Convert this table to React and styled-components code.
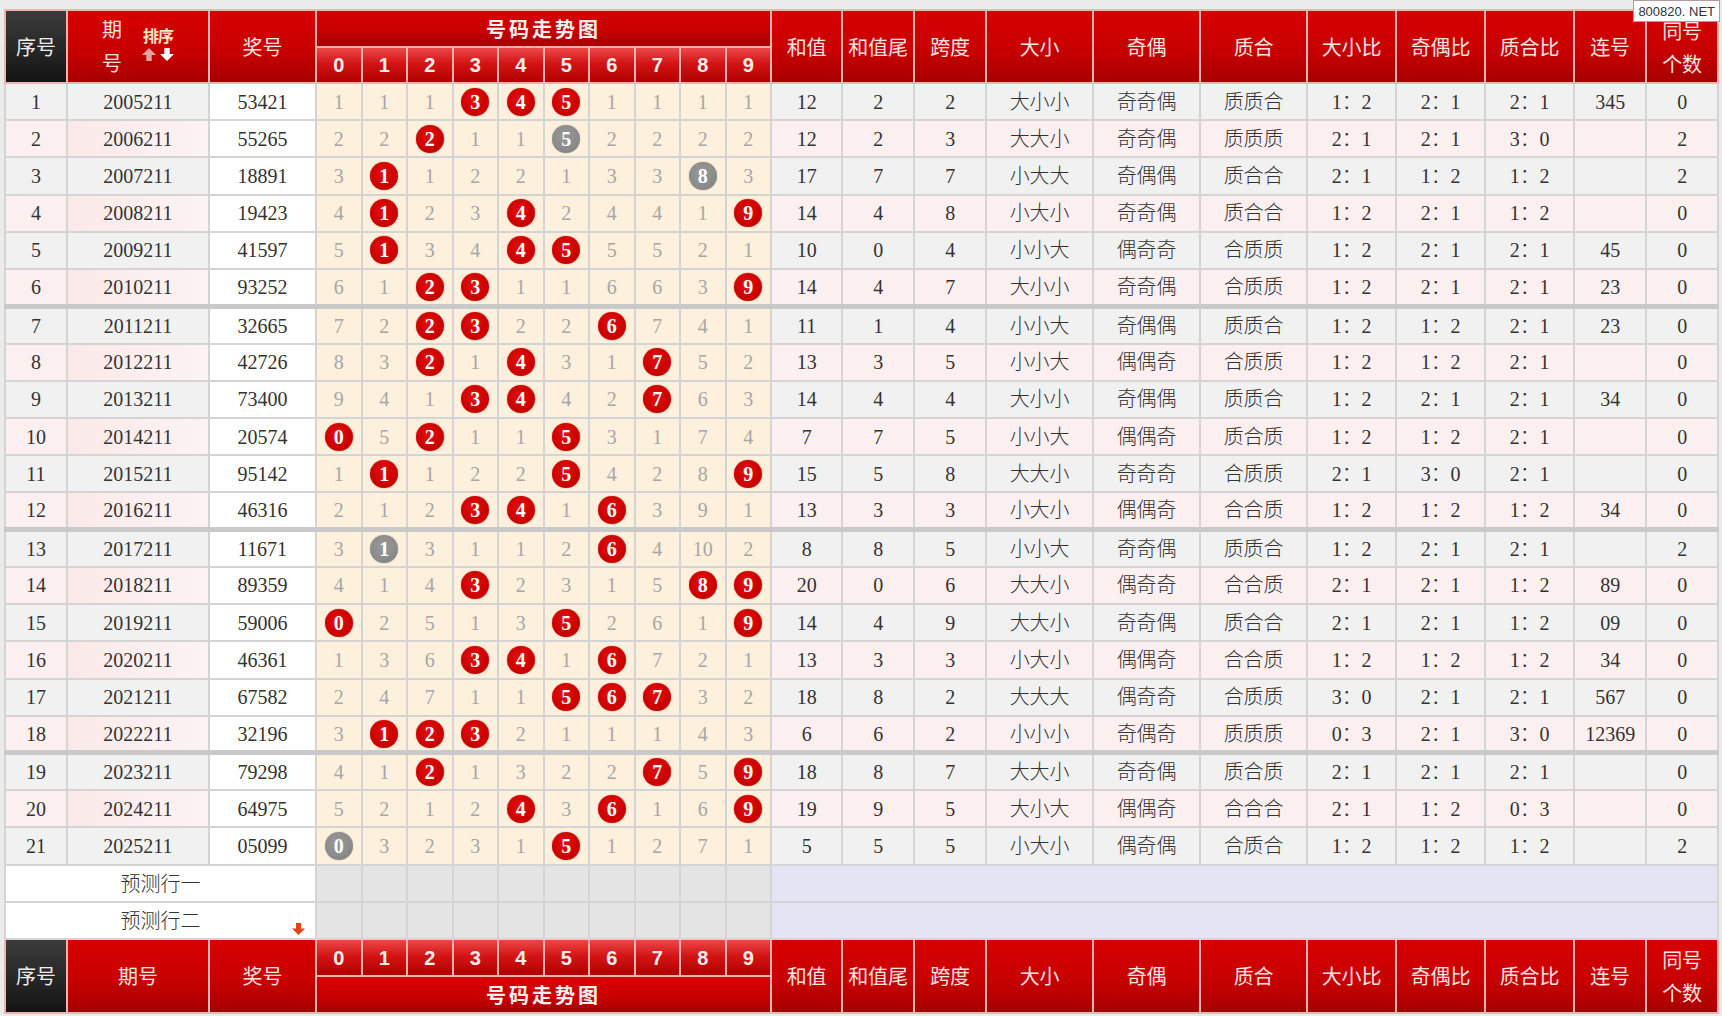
import React from "react";
import styled, { createGlobalStyle, css } from "styled-components";

const GlobalStyle = createGlobalStyle`
  html, body {
    margin: 0;
    padding: 0;
    background: #ebebeb;
  }
  body {
    font-family: "Liberation Serif", "Noto Sans CJK SC", serif;
  }
`;

const SERIF = `"Liberation Serif", "Noto Sans CJK SC", serif`;
const SANS = `"Noto Sans CJK SC", "Liberation Sans", sans-serif`;

const COLS = [62, 142, 107, ...Array(10).fill(45.5), 71, 72, 72, 107, 107, 107, 89, 89, 89, 72, 72];

const TAIL_HEADS = ["和值", "和值尾", "跨度", "大小", "奇偶", "质合", "大小比", "奇偶比", "质合比", "连号"];

// miss: R = red ball, G = gray ball (repeat), number = missing count
const ROWS = [
  ["2005211", "53421", "1 1 1 R R R 1 1 1 1", 12, 2, 2, "大小小", "奇奇偶", "质质合", "1：2", "2：1", "2：1", "345", 0],
  ["2006211", "55265", "2 2 R 1 1 G 2 2 2 2", 12, 2, 3, "大大小", "奇奇偶", "质质质", "2：1", "2：1", "3：0", "", 2],
  ["2007211", "18891", "3 R 1 2 2 1 3 3 G 3", 17, 7, 7, "小大大", "奇偶偶", "质合合", "2：1", "1：2", "1：2", "", 2],
  ["2008211", "19423", "4 R 2 3 R 2 4 4 1 R", 14, 4, 8, "小大小", "奇奇偶", "质合合", "1：2", "2：1", "1：2", "", 0],
  ["2009211", "41597", "5 R 3 4 R R 5 5 2 1", 10, 0, 4, "小小大", "偶奇奇", "合质质", "1：2", "2：1", "2：1", "45", 0],
  ["2010211", "93252", "6 1 R R 1 1 6 6 3 R", 14, 4, 7, "大小小", "奇奇偶", "合质质", "1：2", "2：1", "2：1", "23", 0],
  ["2011211", "32665", "7 2 R R 2 2 R 7 4 1", 11, 1, 4, "小小大", "奇偶偶", "质质合", "1：2", "1：2", "2：1", "23", 0],
  ["2012211", "42726", "8 3 R 1 R 3 1 R 5 2", 13, 3, 5, "小小大", "偶偶奇", "合质质", "1：2", "1：2", "2：1", "", 0],
  ["2013211", "73400", "9 4 1 R R 4 2 R 6 3", 14, 4, 4, "大小小", "奇偶偶", "质质合", "1：2", "2：1", "2：1", "34", 0],
  ["2014211", "20574", "R 5 R 1 1 R 3 1 7 4", 7, 7, 5, "小小大", "偶偶奇", "质合质", "1：2", "1：2", "2：1", "", 0],
  ["2015211", "95142", "1 R 1 2 2 R 4 2 8 R", 15, 5, 8, "大大小", "奇奇奇", "合质质", "2：1", "3：0", "2：1", "", 0],
  ["2016211", "46316", "2 1 2 R R 1 R 3 9 1", 13, 3, 3, "小大小", "偶偶奇", "合合质", "1：2", "1：2", "1：2", "34", 0],
  ["2017211", "11671", "3 G 3 1 1 2 R 4 10 2", 8, 8, 5, "小小大", "奇奇偶", "质质合", "1：2", "2：1", "2：1", "", 2],
  ["2018211", "89359", "4 1 4 R 2 3 1 5 R R", 20, 0, 6, "大大小", "偶奇奇", "合合质", "2：1", "2：1", "1：2", "89", 0],
  ["2019211", "59006", "R 2 5 1 3 R 2 6 1 R", 14, 4, 9, "大大小", "奇奇偶", "质合合", "2：1", "2：1", "1：2", "09", 0],
  ["2020211", "46361", "1 3 6 R R 1 R 7 2 1", 13, 3, 3, "小大小", "偶偶奇", "合合质", "1：2", "1：2", "1：2", "34", 0],
  ["2021211", "67582", "2 4 7 1 1 R R R 3 2", 18, 8, 2, "大大大", "偶奇奇", "合质质", "3：0", "2：1", "2：1", "567", 0],
  ["2022211", "32196", "3 R R R 2 1 1 1 4 3", 6, 6, 2, "小小小", "奇偶奇", "质质质", "0：3", "2：1", "3：0", "12369", 0],
  ["2023211", "79298", "4 1 R 1 3 2 2 R 5 R", 18, 8, 7, "大大小", "奇奇偶", "质合质", "2：1", "2：1", "2：1", "", 0],
  ["2024211", "64975", "5 2 1 2 R 3 R 1 6 R", 19, 9, 5, "大小大", "偶偶奇", "合合合", "2：1", "1：2", "0：3", "", 0],
  ["2025211", "05099", "G 3 2 3 1 R 1 2 7 1", 5, 5, 5, "小大小", "偶奇偶", "合质合", "1：2", "1：2", "1：2", "", 2],
];

const GROUP_STARTS = [7, 13, 19];

const Page = styled.div`
  position: relative;
  padding: 9px 0 6px 4px;
  min-height: 1001px;
`;

const Table = styled.table`
  border-collapse: collapse;
  table-layout: fixed;
  width: 1713px;
`;

const HeadRow = styled.tr`
  height: ${(p) => p.$h}px;
`;

const HeadCell = styled.th`
  padding: 0;
  border: 2px solid #eeb4b4;
  font-family: ${SANS};
  font-size: 20px;
  font-weight: 400;
  line-height: 24px;
  color: #fde4e4;
  text-align: center;
  vertical-align: middle;
  background: linear-gradient(to bottom, #d80000 0%, #c80000 55%, #a80000 100%);

  ${(p) =>
    p.$dark &&
    css`
      color: #ececec;
      background: linear-gradient(to bottom, #3c3c3c 0%, #262626 55%, #141414 100%);
    `}

  ${(p) =>
    p.$digit &&
    css`
      font-family: "Liberation Sans", Arial, sans-serif;
      font-weight: 700;
      font-size: 20px;
      color: #fdeeee;
      background: linear-gradient(to bottom, #ec4848 0%, #d41414 45%, #b20000 100%);
    `}

  ${(p) =>
    p.$title &&
    css`
      font-weight: 700;
      letter-spacing: 3px;
      color: #fdf0f0;
    `}
`;

const TwoLine = styled.span`
  display: block;
  line-height: 33px;
`;

const IssueHead = styled.div`
  display: flex;
  align-items: center;
  justify-content: center;
  gap: 20px;
`;

const IssueLabel = styled.div`
  display: flex;
  flex-direction: column;
  line-height: 34px;
  margin-top: -2px;
`;

const SortBox = styled.div`
  display: flex;
  flex-direction: column;
  align-items: center;
  gap: 4px;
  margin-top: -6px;
`;

const SortText = styled.span`
  font-size: 16px;
  font-weight: 700;
  line-height: 18px;
  color: #ffe6c8;
  letter-spacing: -1px;
`;

const Arrows = styled.span`
  display: flex;
  gap: 4px;
`;

const DataRow = styled.tr`
  height: 37.22px;
`;

const TONES = {
  gray: "#f1f1f1",
  pink: "#fcefef",
  issuePink: "linear-gradient(to right, #fbe9e9, #fcf3f3)",
  white: "#ffffff",
  cream: "#fdf0dc",
  predict: "#e4e4e4",
  lavender: "#e4e4f4",
};

const Cell = styled.td`
  padding: 0;
  border: 2px solid #d4d4d4;
  ${(p) =>
    p.$groupStart &&
    css`
      border-top: 5px solid #c9c9c9;
    `}
  background: ${(p) => TONES[p.$tone] || "#fff"};
  font-family: ${SERIF};
  font-size: 20px;
  font-weight: 300;
  line-height: 1;
  color: #333;
  text-align: center;
  vertical-align: middle;
  white-space: nowrap;
  overflow: hidden;
`;

const Miss = styled.span`
  color: #a6a6a6;
`;

const Ball = styled.span`
  display: inline-flex;
  align-items: center;
  justify-content: center;
  width: 28px;
  height: 28px;
  border-radius: 50%;
  vertical-align: middle;
  font-family: ${SERIF};
  font-weight: 700;
  font-size: 20px;
  color: #fff;
  background: ${(p) =>
    p.$gray
      ? "radial-gradient(circle at 45% 40%, #9a9a9a 0%, #8a8a8a 60%, #7a7a7a 100%)"
      : "radial-gradient(circle at 45% 40%, #e01010 0%, #cc0000 60%, #b00000 100%)"};
  box-shadow: 0 0 1px ${(p) => (p.$gray ? "#777" : "#a00")};
`;

const PredictCell = styled(Cell)`
  position: relative;
  font-family: ${SANS};
  color: #333;
`;

const DownMark = styled.svg`
  position: absolute;
  right: 10px;
  bottom: 3px;
`;

const Watermark = styled.div`
  position: absolute;
  top: 0;
  right: 2px;
  padding: 2px 4px 1px;
  background: #fff;
  border: 1px solid #b49a9a;
  font-family: "Liberation Sans", Arial, sans-serif;
  font-size: 13px;
  line-height: 17px;
  color: #333;
`;

function ArrowIcon({ up, color }) {
  return (
    <svg width="14" height="13" viewBox="0 0 13 12">
      <path
        d={up ? "M6.5 0 L13 6.5 H9 V12 H4 V6.5 H0 Z" : "M6.5 12 L13 5.5 H9 V0 H4 V5.5 H0 Z"}
        fill={color}
      />
    </svg>
  );
}

function HeaderRows({ bottom }) {
  const digits = Array.from({ length: 10 }, (_, i) => (
    <HeadCell key={i} $digit>
      {i}
    </HeadCell>
  ));
  const issue = bottom ? (
    "期号"
  ) : (
    <IssueHead>
      <IssueLabel>
        <span>期</span>
        <span>号</span>
      </IssueLabel>
      <SortBox>
        <SortText>排序</SortText>
        <Arrows>
          <ArrowIcon up color="#e7a4a4" />
          <ArrowIcon color="#ffffff" />
        </Arrows>
      </SortBox>
    </IssueHead>
  );
  const first = (
    <>
      <HeadCell rowSpan={2} $dark>
        序号
      </HeadCell>
      <HeadCell rowSpan={2}>{issue}</HeadCell>
      <HeadCell rowSpan={2}>奖号</HeadCell>
    </>
  );
  const tail = (
    <>
      {TAIL_HEADS.map((h) => (
        <HeadCell key={h} rowSpan={2}>
          {h}
        </HeadCell>
      ))}
      <HeadCell rowSpan={2}>
        <TwoLine>同号</TwoLine>
        <TwoLine>个数</TwoLine>
      </HeadCell>
    </>
  );
  const title = (
    <HeadCell colSpan={10} $title>
      号码走势图
    </HeadCell>
  );

  if (bottom) {
    return (
      <>
        <HeadRow $h={37}>
          {first}
          {digits}
          {tail}
        </HeadRow>
        <HeadRow $h={37}>{title}</HeadRow>
      </>
    );
  }
  return (
    <>
      <HeadRow $h={37}>
        {first}
        {title}
        {tail}
      </HeadRow>
      <HeadRow $h={36}>{digits}</HeadRow>
    </>
  );
}

function TrendRow({ row, index }) {
  const [issue, award, miss, sum, tail, span, bs, oe, pc, bsr, oer, pcr, link, same] = row;
  const no = index + 1;
  const even = no % 2 === 0;
  const g = GROUP_STARTS.includes(no);
  const side = even ? "pink" : "gray";
  const cells = miss.split(" ");

  return (
    <DataRow>
      <Cell $tone={side} $groupStart={g}>
        {no}
      </Cell>
      <Cell $tone={even ? "issuePink" : "gray"} $groupStart={g}>
        {issue}
      </Cell>
      <Cell $tone="white" $groupStart={g}>
        {award}
      </Cell>
      {cells.map((c, d) => (
        <Cell key={d} $tone="cream" $groupStart={g}>
          {c === "R" || c === "G" ? <Ball $gray={c === "G"}>{d}</Ball> : <Miss>{c}</Miss>}
        </Cell>
      ))}
      {[sum, tail, span, bs, oe, pc, bsr, oer, pcr, link, same].map((v, i) => (
        <Cell key={`t${i}`} $tone={side} $groupStart={g}>
          {v}
        </Cell>
      ))}
    </DataRow>
  );
}

function PredictRow({ label, mark }) {
  return (
    <DataRow>
      <PredictCell colSpan={3} $tone="white">
        {label}
        {mark && (
          <DownMark width="13" height="12" viewBox="0 0 13 12">
            <path d="M6.5 12 L13 5.5 H9 V0 H4 V5.5 H0 Z" fill="#e4401a" />
          </DownMark>
        )}
      </PredictCell>
      {Array.from({ length: 10 }, (_, i) => (
        <Cell key={i} $tone="predict" />
      ))}
      <Cell colSpan={11} $tone="lavender" />
    </DataRow>
  );
}

export default function App() {
  return (
    <>
      <GlobalStyle />
      <Page>
        <Table>
          <colgroup>
            {COLS.map((w, i) => (
              <col key={i} style={{ width: w }} />
            ))}
          </colgroup>
          <thead>
            <HeaderRows />
          </thead>
          <tbody>
            {ROWS.map((row, i) => (
              <TrendRow key={row[0]} row={row} index={i} />
            ))}
            <PredictRow label="预测行一" />
            <PredictRow label="预测行二" mark />
          </tbody>
          <tfoot>
            <HeaderRows bottom />
          </tfoot>
        </Table>
        <Watermark>800820. NET</Watermark>
      </Page>
    </>
  );
}
